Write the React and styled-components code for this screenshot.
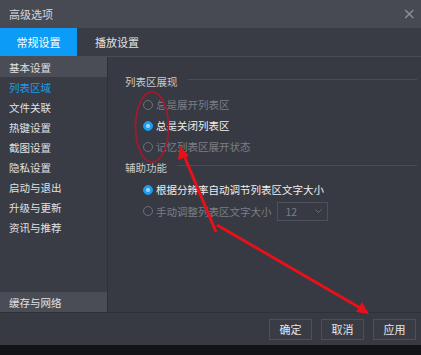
import React from "react";
import styled, { createGlobalStyle } from "styled-components";

const Global = createGlobalStyle`
  html, body { margin: 0; padding: 0; background: #111; }
  body { font-family: "Noto Sans CJK SC", "Noto Sans", sans-serif; }
  * { box-sizing: border-box; }
`;

const Window = styled.div`
  position: relative;
  width: 421px;
  height: 355px;
  display: flex;
  flex-direction: column;
  background: #373a42;
  overflow: hidden;
`;

const TitleBar = styled.div`
  height: 28px;
  display: flex;
  align-items: center;
  justify-content: space-between;
  padding: 0 5px 0 9px;
  background: #474a52;
  color: #d6d7da;
  font-size: 11px;
`;

const Close = styled.span`
  color: #8b8e95;
  font-size: 16px;
  font-family: "DejaVu Sans", sans-serif;
  line-height: 1;
`;

const TabBar = styled.div`
  height: 29px;
  display: flex;
  background: #393c44;
  border-bottom: 1px solid #4a4d55;
`;

const Tab = styled.div`
  width: ${(p) => (p.$active ? "77px" : "auto")};
  padding: ${(p) => (p.$active ? "0" : "0 0 0 18px")};
  display: flex;
  align-items: center;
  justify-content: ${(p) => (p.$active ? "center" : "flex-start")};
  background: ${(p) => (p.$active ? "#0c9bf6" : "transparent")};
  color: ${(p) => (p.$active ? "#ffffff" : "#e2e3e5")};
  font-size: 11px;
`;

const Body = styled.div`
  display: flex;
  height: 255px;
`;

const Sidebar = styled.div`
  width: 108px;
  display: flex;
  flex-direction: column;
  background: #393c44;
  border-right: 1px solid #2e3037;
`;

const SideItem = styled.div`
  height: 20px;
  display: flex;
  align-items: center;
  padding-left: 9px;
  font-size: 10.5px;
  color: ${(p) => (p.$active ? "#1a9cf0" : "#e0e1e3")};
  background: ${(p) => (p.$hl ? "#4a4d55" : "transparent")};
`;

const Spacer = styled.div`
  flex: 1;
`;

const Content = styled.div`
  flex: 1;
  padding: 15px 4px 0 17px;
  display: flex;
  flex-direction: column;
`;

const SectionHead = styled.div`
  display: flex;
  align-items: center;
  gap: 10px;
  height: 18px;
  margin-top: ${(p) => p.$mt || "0"};
  font-size: 10.5px;
  color: #c9cace;
  &::after {
    content: "";
    flex: 1;
    height: 1px;
    background: #4a4d55;
    margin-top: -4px;
  }
`;

const Options = styled.div`
  display: flex;
  flex-direction: column;
  padding: ${(p) => p.$pad || "4px 0 0 18px"};
`;

const Option = styled.div`
  height: ${(p) => p.$h || "21px"};
  display: flex;
  align-items: center;
  gap: 3px;
  font-size: 10.5px;
  color: ${(p) => (p.$disabled ? "#7b7e85" : "#eeeff0")};
`;

const Radio = styled.span`
  width: 10px;
  height: 10px;
  border-radius: 50%;
  flex: none;
  border: 1px solid ${(p) => (p.$checked ? "#1c9df2" : "#6d7077")};
  background: ${(p) =>
    p.$checked ? "radial-gradient(circle, #9fd6fb 0 1.5px, #1c9df2 2.5px)" : "transparent"};
`;

const Select = styled.div`
  margin-left: 2px;
  width: 51px;
  height: 19px;
  border: 1px solid #4e5159;
  display: flex;
  align-items: center;
  justify-content: space-between;
  padding: 0 5px 0 8px;
  color: #7b7e85;
  font-size: 10.5px;
`;

const Footer = styled.div`
  height: 33px;
  display: flex;
  align-items: center;
  justify-content: flex-end;
  gap: 9px;
  padding-right: 5px;
  background: #373a42;
  border-top: 1px solid #2f3138;
`;

const Button = styled.div`
  width: 43px;
  height: 21px;
  display: flex;
  align-items: center;
  justify-content: center;
  border: 1px solid #4d5058;
  background: #393c44;
  color: #e6e7e9;
  font-size: 11px;
`;

const BottomStrip = styled.div`
  flex: 1;
  background: #121316;
`;

const Annot = styled.svg`
  position: absolute;
  left: 0;
  top: 0;
  pointer-events: none;
`;

const sideItems = ["基本设置", "列表区域", "文件关联", "热键设置", "截图设置", "隐私设置", "启动与退出", "升级与更新", "资讯与推荐"];

export default function App() {
  return (
    <>
      <Global />
      <Window>
        <TitleBar>
          <span>高级选项</span>
          <Close>×</Close>
        </TitleBar>
        <TabBar>
          <Tab $active>常规设置</Tab>
          <Tab>播放设置</Tab>
        </TabBar>
        <Body>
          <Sidebar>
            {sideItems.map((t, i) => (
              <SideItem key={t} $hl={i === 0} $active={i === 1}>
                {t}
              </SideItem>
            ))}
            <Spacer />
            <SideItem $hl>缓存与网络</SideItem>
          </Sidebar>
          <Content>
            <SectionHead>列表区展现</SectionHead>
            <Options>
              <Option $disabled>
                <Radio />
                总是展开列表区
              </Option>
              <Option>
                <Radio $checked />
                总是关闭列表区
              </Option>
              <Option $disabled>
                <Radio />
                记忆列表区展开状态
              </Option>
            </Options>
            <SectionHead $mt="1px">辅助功能</SectionHead>
            <Options $pad="3px 0 0 18px">
              <Option>
                <Radio $checked />
                根据分辨率自动调节列表区文字大小
              </Option>
              <Option $disabled $h="22px">
                <Radio />
                手动调整列表区文字大小
                <Select>
                  <span>12</span>
                  <svg width="7" height="5" viewBox="0 0 7 5">
                    <path d="M0.5 0.5 L3.5 3.5 L6.5 0.5" fill="none" stroke="#6a6d74" strokeWidth="1" />
                  </svg>
                </Select>
              </Option>
            </Options>
          </Content>
        </Body>
        <Footer>
          <Button>确定</Button>
          <Button>取消</Button>
          <Button>应用</Button>
        </Footer>
        <BottomStrip />
        <Annot width="421" height="355" viewBox="0 0 421 355">
          <ellipse cx="152" cy="127" rx="16.5" ry="35" fill="none" stroke="#9e1a2d" strokeWidth="1.8" />
          <line x1="216" y1="232" x2="183" y2="153" stroke="#e8101a" strokeWidth="3" />
          <polygon points="180,146 178,160 189,156" fill="#e8101a" />
          <line x1="217" y1="225" x2="362" y2="309" stroke="#e8101a" strokeWidth="3" />
          <polygon points="369,314 356,312 362,302" fill="#e8101a" />
        </Annot>
      </Window>
    </>
  );
}
